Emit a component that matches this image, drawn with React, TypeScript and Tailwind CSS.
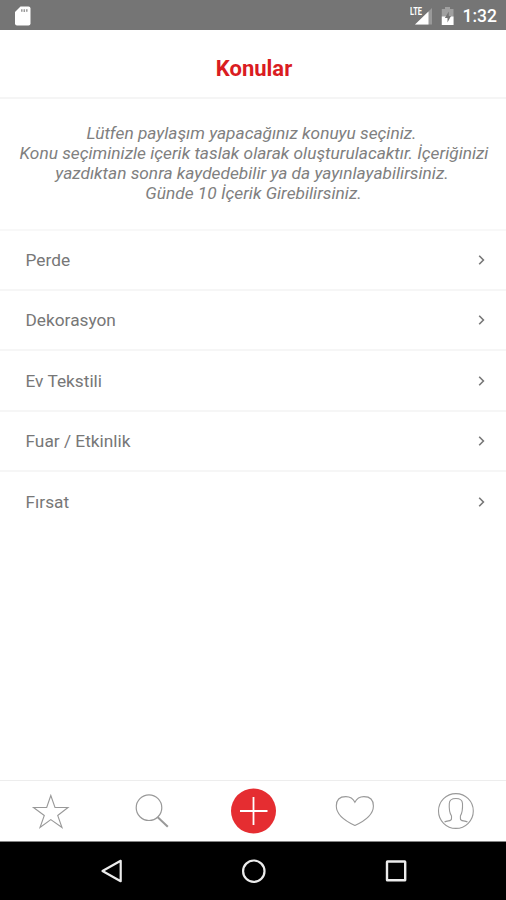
import React from 'react';

const description = [
  { text: 'Lütfen paylaşım yapacağınız konuyu seçiniz.', nudge: 'pr-[5px]' },
  { text: 'Konu seçiminizle içerik taslak olarak oluşturulacaktır. İçeriğinizi', nudge: '' },
  { text: 'yazdıktan sonra kaydedebilir ya da yayınlayabilirsiniz.', nudge: 'pr-[4px]' },
  { text: 'Günde 10 İçerik Girebilirsiniz.', nudge: 'pr-px' },
];

const topics = [
  { name: 'Perde', height: 'h-[60px]' },
  { name: 'Dekorasyon', height: 'h-[60px]' },
  { name: 'Ev Tekstili', height: 'h-[61px]' },
  { name: 'Fuar / Etkinlik', height: 'h-[60px]' },
  { name: 'Fırsat', height: 'h-[59px]' },
];

function StatusBar() {
  return (
    <header className="flex h-[30px] shrink-0 items-center justify-between bg-[#757575] pt-px pr-[9px] pl-[14px] text-white">
      <svg width="18" height="20" viewBox="0 0 18 20">
        <path d="M6.5 0.5H14.5Q16.5 0.5 16.5 2.5V17.5Q16.5 19.5 14.5 19.5H3Q1 19.5 1 17.5V6Z" fill="#fff" />
        <path d="M7.8 3.3v2.4M10.3 3.3v2.8M12.8 3.3v2.4" stroke="#999" strokeWidth="1.5" />
      </svg>
      <div className="flex items-center">
        <svg width="24" height="20" viewBox="0 0 24 20">
          <path d="M22 2V18.5H5Z" fill="#999" />
          <path d="M18.5 5.5V18.5H5Z" fill="#fff" />
          <text x="0" y="9" fill="#fff" fontFamily="Roboto, sans-serif" fontWeight="700" fontSize="11" textLength="12" lengthAdjust="spacingAndGlyphs">LTE</text>
        </svg>
        <svg className="ml-[7px]" width="14" height="20" viewBox="0 0 14 20">
          <path d="M4 1h5v2h3.5v16H.8V3H4Z" fill="#a0a0a0" />
          <path d="M.8 10.5h11.7V19H.8Z" fill="#fff" />
          <path d="M7.8 5.5 3.8 12h2.7v4.5L10 10H7.8Z" fill="#757575" />
        </svg>
        <span className="ml-[8px] text-[17.5px] leading-5 font-medium">1:32</span>
      </div>
    </header>
  );
}

function TabBar() {
  return (
    <nav className="grid h-[61px] shrink-0 grid-cols-5 place-items-center border-t border-[#ededed] bg-white">
      <svg width="50" height="50" viewBox="26 786 50 50" fill="none" stroke="#999" strokeWidth="1.1">
        <path d="M50.8 795.5 55 807.5H68L57.7 815.5 62 827.5 50.8 819.6 40 827.5 44.3 815.5 33.5 807.5H46.7Z" />
      </svg>
      <svg width="50" height="50" viewBox="127 786 50 50" fill="none" stroke="#999">
        <circle cx="149" cy="807.7" r="12.8" strokeWidth="1.2" />
        <path d="m157.5 817 10.3 9.7" strokeWidth="2" />
      </svg>
      <svg width="50" height="50" viewBox="228 786 50 50">
        <circle cx="253.5" cy="811" r="22.5" fill="#e52d31" />
        <path d="M253.5 797v28M240 811h27.5" stroke="#fff" strokeWidth="1.8" />
      </svg>
      <svg width="50" height="50" viewBox="329 786 50 50" fill="none" stroke="#999" strokeWidth="1.1">
        <path d="M354.9 802.3C353.2 798.7 350 796.6 345.8 796.6C339.8 796.6 336.3 800.2 336.3 806C336.3 814 344 820.5 354.9 825.5C365.8 820.5 373.4 814 373.4 806C373.4 800.2 369.9 796.6 363.9 796.6C359.7 796.6 356.6 798.7 354.9 802.3Z" />
      </svg>
      <svg width="50" height="50" viewBox="430 786 50 50" fill="none" stroke="#999" strokeWidth="1.1">
        <circle cx="455.9" cy="811" r="17.4" />
        <path d="M444.5 822C447.5 820 451.7 822 451.5 818.5V816C449.2 812.5 449 808 449.3 803.5C449.5 799.8 452 798.5 455.9 798.5C459.8 798.5 462.3 799.8 462.5 803.5C462.7 808 462.5 812.5 460.4 816V818.5C460.2 822 464.5 820 467.5 822" />
      </svg>
    </nav>
  );
}

function SystemNav() {
  return (
    <footer className="flex h-[59px] shrink-0 items-center justify-center gap-[112px] border-t border-[#858585] bg-black">
      <svg width="30" height="30" viewBox="96 856 30 30" fill="none" stroke="#ececec" strokeWidth="2.2" strokeLinejoin="round">
        <path d="M120.7 860.8V881.2L102.5 871Z" />
      </svg>
      <svg width="30" height="30" viewBox="238 856 30 30" fill="none" stroke="#ececec" strokeWidth="2.2">
        <circle cx="253.8" cy="871.2" r="10.7" />
      </svg>
      <svg width="30" height="30" viewBox="380 856 30 30" fill="none" stroke="#ececec" strokeWidth="2.4" strokeLinejoin="round">
        <rect x="387" y="861.5" width="18.2" height="18.8" rx=".4" />
      </svg>
    </footer>
  );
}

export default function App() {
  return (
    <div className="flex h-[900px] w-[506px] flex-col overflow-hidden bg-white font-['Roboto',sans-serif]">
      <StatusBar />
      <h1 className="flex h-[69px] shrink-0 items-center justify-center border-b-2 border-[#f5f5f5] pt-[9px] pl-[2px] text-[22px] font-bold text-[#da1c22]">
        Konular
      </h1>
      <p className="flex h-[132px] shrink-0 flex-col items-center border-b-2 border-[#f8f8f8] pt-[24px] pl-[2px] text-[17.3px] leading-5 text-[#808080] italic">
        {description.map((line) => (
          <span key={line.text} className={`whitespace-nowrap ${line.nudge}`}>{line.text}</span>
        ))}
      </p>
      <ul className="flex-1">
        {topics.map((topic, i) => (
          <li
            key={topic.name}
            className={`flex items-center justify-between pr-[20px] pl-[25.5px] text-[17.3px] text-[#777] ${topic.height} ${i < topics.length - 1 ? 'border-b-2 border-[#f6f6f6]' : ''}`}
          >
            <span className="pt-[2px]">{topic.name}</span>
            <svg width="9" height="12" viewBox="0 0 9 12" fill="none" stroke="#777" strokeWidth="1.6">
              <path d="m2.2 1.8 4.2 4.2-4.2 4.2" />
            </svg>
          </li>
        ))}
      </ul>
      <TabBar />
      <SystemNav />
    </div>
  );
}
